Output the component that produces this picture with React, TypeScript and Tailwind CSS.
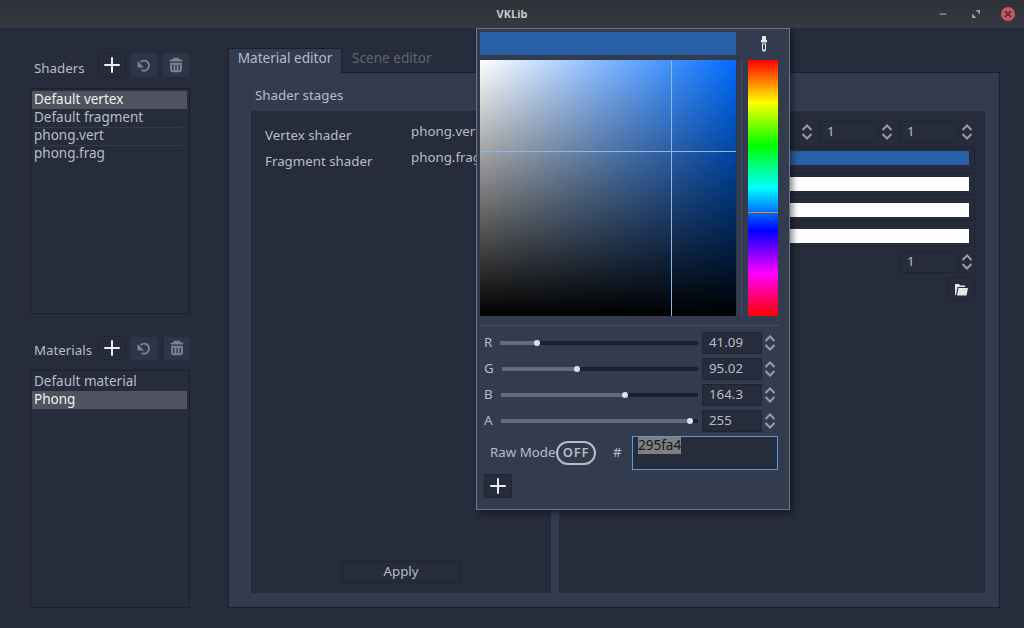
import { Minus, Plus, X } from 'lucide-react';

const shaders = ['Default vertex', 'Default fragment', 'phong.vert', 'phong.frag'];
const materials = ['Default material', 'Phong'];

const sliders = [
    { label: 'R', start: 20, end: 218, knob: 57, value: '41.09' },
    { label: 'G', start: 22, end: 218, knob: 97, value: '95.02' },
    { label: 'B', start: 21, end: 218, knob: 145, value: '164.3' },
    { label: 'A', start: 21, end: 218, knob: 210, value: '255' },
];

function TrashIcon() {
    return (
        <svg width="16" height="16" viewBox="0 0 18 18" fill="none" stroke="currentColor" strokeWidth="2.200">
            <path d="M2 4h14M6.500 3.500V2h5v1.500" />
            <path d="M3.500 7.500h11V14a2 2 0 0 1-2 2h-7a2 2 0 0 1-2-2z" />
            <path d="M7.200 7.500v8M10.800 7.500v8" />
        </svg>
    );
}

function UndoIcon() {
    return (
        <svg width="16" height="16" viewBox="0 0 16 16" fill="none" stroke="currentColor" strokeWidth="2">
            <path d="M4.500 5A5 5 0 1 1 5.500 13" />
            <path d="M1.500 4v6.500H8z" fill="currentColor" stroke="none" />
        </svg>
    );
}

function SpinArrows() {
    return (
        <svg width="12" height="16" viewBox="0 0 12 16" fill="none" stroke="#9a9da5" strokeWidth="2">
            <path d="M1.500 6l4.500-4.500L10.500 6" />
            <path d="M1.500 10l4.500 4.500 4.500-4.500" />
        </svg>
    );
}

function ToolButtons({ wideGap }: { wideGap?: boolean }) {
    return (
        <div className={`flex items-center ${wideGap ? '' : 'mr-[1px]'}`}>
            <button type="button" className="flex h-[24px] w-[28px] items-center justify-center border border-[#1f2532] text-[#eceef2]">
                <Plus size={24} strokeWidth={2} absoluteStrokeWidth />
            </button>
            <button type="button" className="ml-[5px] flex h-[23px] w-[26px] items-center justify-center bg-[#2e3546] text-[#7d828f]">
                <UndoIcon />
            </button>
            <button type="button" className={`flex h-[23px] w-[26px] items-center justify-center bg-[#2e3546] text-[#7d828f] ${wideGap ? 'ml-[7px]' : 'ml-[6px]'}`}>
                <TrashIcon />
            </button>
        </div>
    );
}

function ItemList({ items, selected, height, lines }: { items: string[]; selected: string; height: string; lines?: boolean }) {
    return (
        <ul className={`${height} border border-[#1b202c] bg-[#262c3b] pt-[2px] pr-[2px] pl-[1px]`}>
            {items.map((item, i) => (
                <li
                    key={item}
                    className={`relative h-[18px] pl-[2px] text-[13.5px] leading-[16px] ${item === selected ? 'bg-[#50535e] text-[#eeeff2]' : 'text-[#b9bcc6]'}`}
                >
                    {item}
                    {lines && i >= 2 && <span className="absolute top-0 right-[5px] left-[1px] h-px bg-[#333a4b]" />}
                </li>
            ))}
        </ul>
    );
}

function Spin({ value }: { value: string }) {
    return (
        <div className="flex h-[22px] w-[76px] items-center justify-between">
            <div className="flex h-[22px] w-[60px] items-center border border-[#1f2532] bg-[#262c3b] pl-[7px] text-[13.3px] text-[#b9bcc6]">
                {value}
            </div>
            <span className="mr-[2px] flex"><SpinArrows /></span>
        </div>
    );
}

function ColorRow({ color }: { color: string }) {
    return (
        <div className="flex h-[22px] w-[300px] items-center border border-[#1f2532] pr-[5px] pl-[5px]">
            <div className={`h-[14px] w-full ${color}`} />
        </div>
    );
}

function ColorPicker() {
    return (
        <div className="absolute top-[28px] left-[476px] flex h-[482px] w-[314px] flex-col border border-[#6d7382] bg-[#333b4f] pt-[3px] pr-[10px] pl-[3px] shadow-[3px_3px_6px_rgba(0,0,0,0.45)]">
            <div className="flex h-[23px] items-center justify-between">
                <div className="h-[23px] w-[256px] bg-[#295fa4]" />
                <svg width="10" height="16" viewBox="0 0 10 16" className="mr-[10px] text-[#e8e8e8]" fill="currentColor">
                    <path d="M3 1.500a2 2 0 0 1 4 0V4h1v2.500H2V4h1zM3 7.500h4V14l-1 1.500H4L3 14zm1 1v5h2v-5z" />
                </svg>
            </div>
            <div className="mt-[5px] flex h-[256px]">
                <div className="relative h-[256px] w-[256px] bg-[linear-gradient(to_bottom,transparent,black),linear-gradient(to_right,white,#006cff)]">
                    <span className="absolute top-0 bottom-0 left-[191px] w-px bg-[#8fb8e6]" />
                    <span className="absolute top-[91px] right-0 left-0 h-px bg-[#8fb8e6]" />
                </div>
                <div className="ml-[5px] h-[256px] w-px bg-[#454c5f]" />
                <div className="relative ml-[6px] h-[256px] w-[30px] bg-[linear-gradient(to_bottom,#f00,#ff0,#0f0,#0ff,#00f,#f0f,#f00)]">
                    <span className="absolute top-[152px] right-0 left-0 h-px bg-[#ff8a00]" />
                </div>
            </div>
            <div className="mt-[9px] h-px w-[300px] bg-[#454c5f]" />
            <div className="mt-[6px] flex flex-col gap-[4px]">
                {sliders.map((s) => (
                    <div key={s.label} className="flex h-[22px] items-center">
                        <div className="relative h-[22px] w-[222px] text-[13.3px] leading-[20px] text-[#b9bcc6]">
                            <span className="absolute left-[4px]">{s.label}</span>
                            <span
                                className="absolute top-[9px] h-[4px] bg-[#1b202c]"
                                style={{ left: s.start, width: s.end - s.start }}
                            />
                            <span
                                className="absolute top-[9px] h-[4px] bg-[#656b78]"
                                style={{ left: s.start, width: s.knob - s.start }}
                            />
                            <span
                                className="absolute top-[8px] h-[6px] w-[6px] rounded-full bg-[#dfe1e5]"
                                style={{ left: s.knob - 3 }}
                            />
                        </div>
                        <div className="flex h-[22px] w-[60px] items-center border border-[#1f2532] bg-[#262c3b] pl-[6px] text-[13.3px] text-[#b9bcc6]">
                            {s.value}
                        </div>
                        <span className="ml-[2px] flex"><SpinArrows /></span>
                    </div>
                ))}
            </div>
            <div className="mt-[4px] flex h-[34px] items-start">
                <span className="mt-[6px] ml-[10px] w-[66px] text-[13.3px] leading-[20px] whitespace-nowrap text-[#b9bcc6]">Raw Mode</span>
                <span className="mt-[5px] flex h-[24px] w-[40px] items-center justify-center rounded-full border-2 border-[#b9bcc6] text-[13px] font-semibold tracking-[0.8px] text-[#b9bcc6]">
                    OFF
                </span>
                <span className="mt-[6px] ml-[17px] w-[19px] text-[13.3px] leading-[20px] text-[#b9bcc6]">#</span>
                <div className="h-[34px] w-[146px] border border-[#5f97dd] bg-[#262c3b] pl-[5px]">
                    <span className="block w-fit bg-[#7f7f7f] text-[13.5px] leading-[17px] text-[#14171f]">295fa4</span>
                </div>
            </div>
            <button type="button" className="mt-[4px] ml-[4px] flex h-[24px] w-[28px] items-center justify-center border border-[#1f2532] bg-[#262c3b] text-[#eceef2]">
                <Plus size={24} strokeWidth={2} absoluteStrokeWidth />
            </button>
        </div>
    );
}

export default function App() {
    return (
        <div className="relative flex h-[628px] w-[1024px] flex-col overflow-hidden bg-[#262c3b] font-['Noto_Sans',sans-serif]">
            <header className="relative flex h-[28px] shrink-0 items-center justify-center bg-[linear-gradient(to_bottom,#2e3138,#373a42)] text-[11px] font-bold text-[#c5c7cc]">
                VKLib
                <div className="absolute top-0 right-[9px] flex h-[28px] items-center">
                    <Minus size={10} strokeWidth={3} className="text-[#9a9da3]" />
                    <svg width="10" height="10" viewBox="0 0 10 10" className="ml-[23px] text-[#9a9da3]" fill="currentColor">
                        <path d="M4.500 1h4.500v4.500zM5.500 9H1V4.500z" />
                    </svg>
                    <span className="ml-[20px] flex h-[14px] w-[14px] items-center justify-center rounded-full bg-[#cf5560] text-[#2e3138]">
                        <X size={10} strokeWidth={3.5} />
                    </span>
                </div>
            </header>

            <main className="flex min-h-0 flex-1">
                <aside className="ml-[30px] flex w-[160px] flex-col pt-[25px]">
                    <div className="flex h-[24px] items-center justify-between">
                        <span className="mt-[7px] ml-[4px] text-[13.3px] text-[#b9bcc6]">Shaders</span>
                        <ToolButtons />
                    </div>
                    <div className="mt-[11px]">
                        <ItemList items={shaders} selected="Default vertex" height="h-[226px]" lines />
                    </div>
                    <div className="mt-[22px] flex h-[24px] items-center justify-between">
                        <span className="mt-[5px] ml-[4px] text-[13.3px] text-[#b9bcc6]">Materials</span>
                        <ToolButtons wideGap />
                    </div>
                    <div className="mt-[10px]">
                        <ItemList items={materials} selected="Phong" height="h-[238px]" />
                    </div>
                </aside>

                <section className="mt-[20px] ml-[38px] flex h-[560px] w-[772px] flex-col">
                    <div className="flex h-[25px] shrink-0 text-[13.6px]">
                        <div className="z-10 flex h-[25px] w-[113px] items-center justify-center border-t border-l border-[#1b202c] bg-[#333b4f] pb-[5px] text-[#b9bcc6]">
                            Material editor
                        </div>
                        <div className="flex h-[25px] flex-1 items-center border-b border-l border-[#1b202c] pb-[3px] pl-[10px] text-[#5f6572]">
                            Scene editor
                        </div>
                    </div>
                    <div className="flex min-h-0 flex-1 gap-[8px] border-r border-b border-l border-[#1b202c] bg-[#333b4f] pt-[38px] pr-[14px] pb-[14px] pl-[22px]">
                        <div className="relative flex w-[300px] flex-col bg-[#262c3b]">
                            <span className="absolute top-[-26px] left-[4px] text-[13.3px] leading-[20px] text-[#b9bcc6]">Shader stages</span>
                            <div className="mt-[10px] flex pl-[14px] text-[13.3px] leading-[20px] text-[#b9bcc6]">
                                <div className="flex w-[146px] flex-col gap-[6px] pt-[4px]">
                                    <span>Vertex shader</span>
                                    <span>Fragment shader</span>
                                </div>
                                <div className="flex flex-col gap-[6px]">
                                    <span>phong.vert</span>
                                    <span>phong.frag</span>
                                </div>
                            </div>
                            <button type="button" className="mx-auto mt-auto mb-[10px] h-[22px] w-[118px] border border-[#1f2532] pb-[2px] text-[13.3px] text-[#b9bcc6]">
                                Apply
                            </button>
                        </div>
                        <div className="flex w-[426px] flex-col items-end gap-[4px] bg-[#262c3b] pt-[10px] pr-[10px]">
                            <div className="flex gap-[4px]">
                                <Spin value="1" />
                                <Spin value="1" />
                                <Spin value="1" />
                            </div>
                            <ColorRow color="bg-[#295fa4]" />
                            <ColorRow color="bg-white" />
                            <ColorRow color="bg-white" />
                            <ColorRow color="bg-white" />
                            <Spin value="1" />
                            <button type="button" className="flex h-[24px] w-[27px] items-center justify-center border border-[#1f2532] pr-[2px] text-[#e6e6e6]">
                                <svg width="14" height="13" viewBox="0 0 14 13" fill="currentColor">
                                    <path d="M1 1h4l1 1.500h5V4H3.500L2 12H1z" />
                                    <path d="M4.500 5H14l-1.500 7.500H3z" />
                                </svg>
                            </button>
                        </div>
                    </div>
                </section>
            </main>

            <ColorPicker />
        </div>
    );
}
